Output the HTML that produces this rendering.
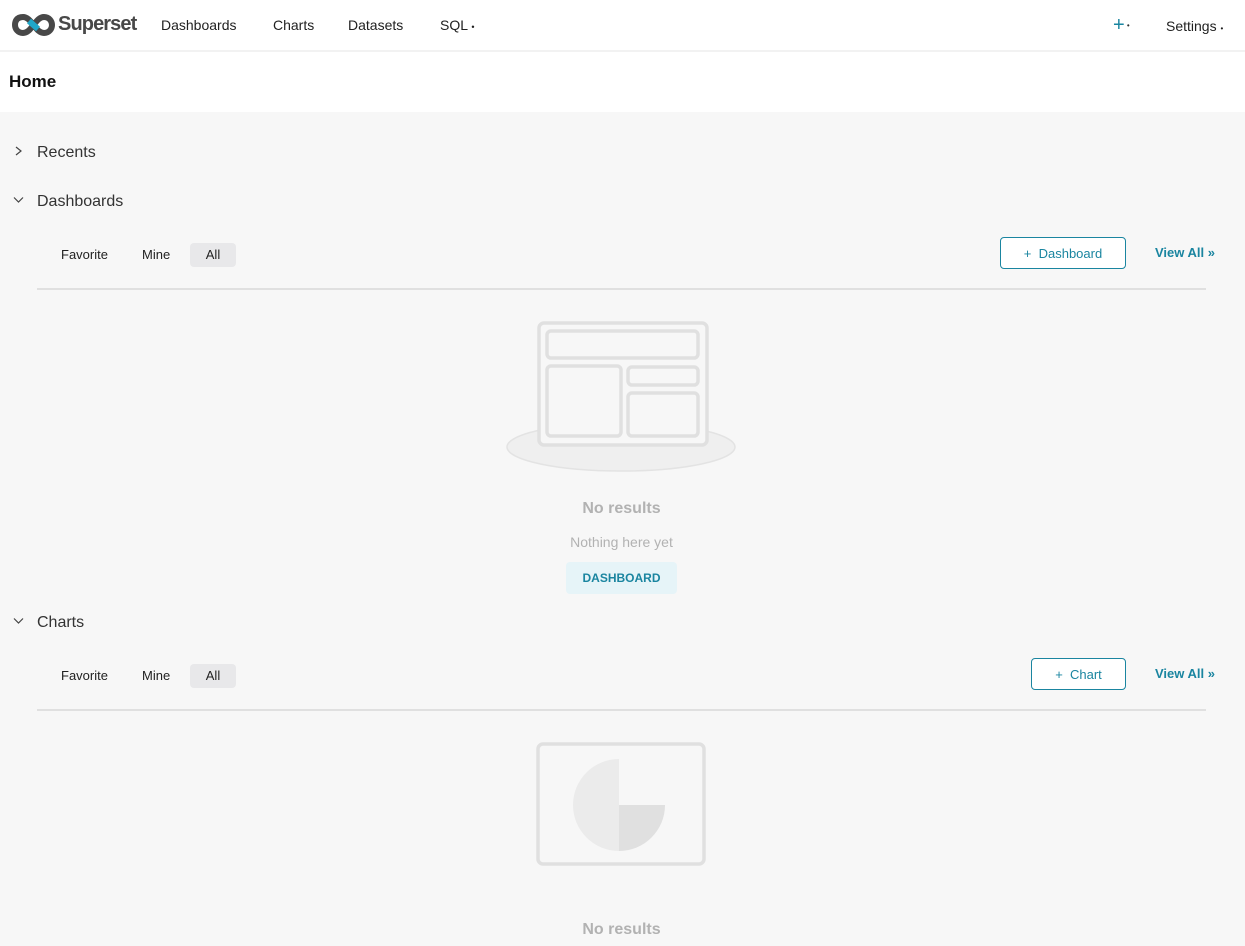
<!DOCTYPE html>
<html><head><meta charset="utf-8"><style>
*{box-sizing:border-box;margin:0;padding:0}
body{width:1245px;height:946px;overflow:hidden;background:#f7f7f7;font-family:"Liberation Sans",sans-serif;color:#1f1f1f;position:relative}
.a{position:absolute;white-space:nowrap}
.nav{position:absolute;left:0;top:0;width:1245px;height:50px;background:#fff}
.hl{position:absolute;left:0;top:50px;width:1245px;height:62px;background:#fff;border-top:2px solid #f2f2f2}
.tab{font-size:13px;color:#222}
.all{background:#e8e8ea;border-radius:4px}
.btn{border:1px solid #1a85a0;border-radius:4px;color:#1a85a0;font-size:13px;text-align:center;background:#fff}
.va{color:#1a85a0;font-size:13px;font-weight:bold}
.line{position:absolute;left:37px;width:1169px;height:2px;background:#e0e0e0}
.gray{color:#b2b2b2}
</style></head><body>
<div class="nav"></div>
<div class="hl"></div>
<svg class="a" style="left:12px;top:13px" width="43" height="24" viewBox="0 0 43 24">
<path d="M11 4 C4 4 3 9 3 12 C3 16 6 20 11 20 C16 20 19 15 21.5 12 C24 9 27 4 32 4 C37 4 40 8 40 12 C40 16 37 20 32 20 C27 20 24 15 21.5 12 C19 9 16 4 11 4 Z" fill="none" stroke="#484848" stroke-width="6"/>
<path d="M17 8 L26 16" stroke="#20a7c9" stroke-width="6"/>
</svg>
<div class="a" style="left:58px;top:13px;font-size:20px;font-weight:bold;color:#484848;letter-spacing:-0.9px">Superset</div>
<div class="a" style="left:161px;top:17px;font-size:14px">Dashboards</div>
<div class="a" style="left:273px;top:17px;font-size:14px">Charts</div>
<div class="a" style="left:348px;top:17px;font-size:14px">Datasets</div>
<div class="a" style="left:440px;top:17px;font-size:14px">SQL <span style="font-size:9px">•</span></div>
<div class="a" style="left:1113px;top:14px;font-size:20px;color:#1a85a0">+<span style="font-size:8px;color:#333;vertical-align:middle"> •</span></div>
<div class="a" style="left:1166px;top:18px;font-size:14px">Settings <span style="font-size:8px">•</span></div>
<div class="a" style="left:9px;top:72px;font-size:17px;font-weight:bold;color:#111">Home</div>

<svg class="a" style="left:14px;top:146px" width="10" height="10"><path d="M2 1 L7 5 L2 9" fill="none" stroke="#444" stroke-width="1.2"/></svg>
<div class="a" style="left:37px;top:144px;font-size:16px;color:#333">Recents</div>
<svg class="a" style="left:13px;top:196px" width="11" height="8"><path d="M1 1.5 L5.5 6 L10 1.5" fill="none" stroke="#444" stroke-width="1.2"/></svg>
<div class="a" style="left:37px;top:193px;font-size:16px;color:#333">Dashboards</div>
<div class="a tab" style="left:61px;top:247px">Favorite</div>
<div class="a tab" style="left:142px;top:247px">Mine</div>
<div class="a tab all" style="left:190px;top:243px;width:46px;height:24px;padding-top:4px;text-align:center">All</div>
<div class="a btn" style="left:1000px;top:237px;width:126px;height:32px;padding-top:8px">+&nbsp; Dashboard</div>
<div class="a va" style="left:1155px;top:245px">View All »</div>
<div class="line" style="top:288px"></div>
<svg class="a" style="left:500px;top:315px" width="245" height="165">
<ellipse cx="121" cy="132" rx="114" ry="24" fill="#efefef" stroke="#e3e3e3" stroke-width="1.5"/>
<rect x="39" y="8" width="168" height="122" rx="5" fill="#f7f7f7" stroke="#e0e0e0" stroke-width="3.5"/>
<rect x="47" y="16" width="151" height="27" rx="4" fill="none" stroke="#e0e0e0" stroke-width="3.5"/>
<rect x="47" y="51" width="74" height="70" rx="4" fill="none" stroke="#e0e0e0" stroke-width="3.5"/>
<rect x="128" y="52" width="70" height="18" rx="4" fill="none" stroke="#e0e0e0" stroke-width="3.5"/>
<rect x="128" y="78" width="70" height="43" rx="4" fill="none" stroke="#e0e0e0" stroke-width="3.5"/>
</svg>
<div class="a gray" style="left:0;width:1243px;text-align:center;top:500px;font-size:16px;font-weight:bold">No results</div>
<div class="a gray" style="left:0;width:1243px;text-align:center;top:534px;font-size:14px">Nothing here yet</div>
<div class="a" style="left:566px;top:562px;width:111px;height:32px;background:#e6f4f8;border-radius:4px;color:#1a85a0;font-size:12px;font-weight:bold;text-align:center;padding-top:9px">DASHBOARD</div>

<svg class="a" style="left:13px;top:617px" width="11" height="8"><path d="M1 1.5 L5.5 6 L10 1.5" fill="none" stroke="#444" stroke-width="1.2"/></svg>
<div class="a" style="left:37px;top:614px;font-size:16px;color:#333">Charts</div>
<div class="a tab" style="left:61px;top:668px">Favorite</div>
<div class="a tab" style="left:142px;top:668px">Mine</div>
<div class="a tab all" style="left:190px;top:664px;width:46px;height:24px;padding-top:4px;text-align:center">All</div>
<div class="a btn" style="left:1031px;top:658px;width:95px;height:32px;padding-top:8px">+&nbsp; Chart</div>
<div class="a va" style="left:1155px;top:666px">View All »</div>
<div class="line" style="top:709px"></div>
<svg class="a" style="left:530px;top:738px" width="185" height="135">
<rect x="8" y="6" width="166" height="120" rx="5" fill="none" stroke="#e0e0e0" stroke-width="3.5"/>
<path d="M89 21 A46 46 0 0 0 89 113 Z" fill="#ebebeb"/>
<path d="M89 67 L135 67 A46 46 0 0 1 89 113 Z" fill="#e0e0e0"/>
</svg>
<div class="a gray" style="left:0;width:1243px;text-align:center;top:921px;font-size:16px;font-weight:bold">No results</div>
</body></html>
